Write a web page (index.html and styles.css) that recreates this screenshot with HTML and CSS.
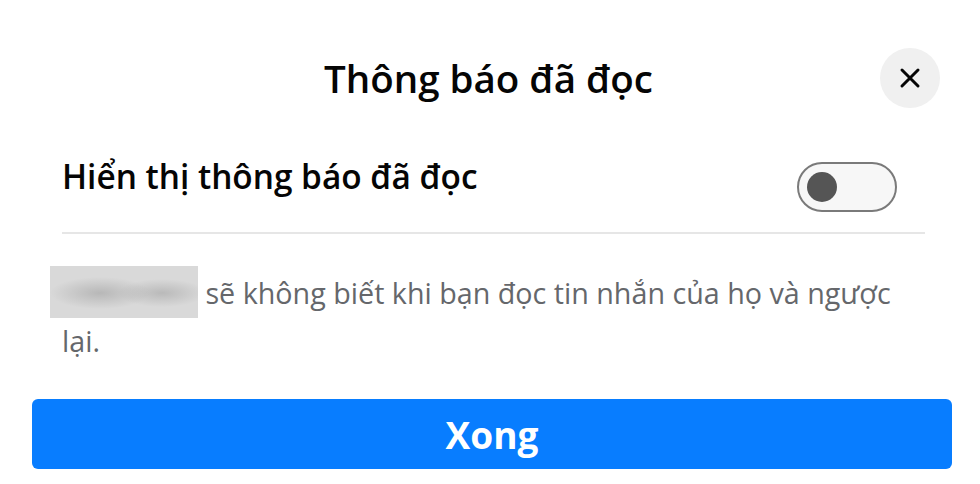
FILE: index.html
```html
<!DOCTYPE html>
<html lang="vi">
<head>
    <meta charset="UTF-8">
    <meta name="viewport" content="width=device-width, initial-scale=1.0">
    <title>Thông báo đã đọc</title>
    <link rel="stylesheet" href="styles.css">
</head>
<body>
    <div class="dialog">
        <div class="dialog-header">
            <h2 class="dialog-title">Thông báo đã đọc</h2>
            <button class="close-button" aria-label="Đóng">
                <svg width="22" height="22" viewBox="0 0 22 22">
                    <path d="M3 3 L19 19 M19 3 L3 19" stroke="#050505" stroke-width="3" stroke-linecap="round"/>
                </svg>
            </button>
        </div>

        <div class="setting-row">
            <span class="setting-label">Hiển thị thông báo đã đọc</span>
            <label class="switch">
                <input type="checkbox">
                <span class="switch-track"></span>
            </label>
        </div>

        <p class="description">
            <span class="hidden-name"></span>
            sẽ không biết khi bạn đọc tin nhắn của họ và ngược lại.
        </p>

        <button class="done-button">Xong</button>
    </div>
</body>
</html>
```

FILE: styles.css
```css
body {
    margin: 0;
    padding: 0;
    background-color: #fff;
    font-family: "Open Sans", "Noto Sans", Arial, sans-serif;
    color: #050505;
}

.dialog {
    width: 980px;
    box-sizing: border-box;
    padding: 48px 55px 0 62px;
}

.dialog-header {
    position: relative;
    display: flex;
    justify-content: center;
    align-items: center;
    height: 60px;
}

.dialog-title {
    margin: 0 0 0 -10px;
    font-size: 38.5px;
    font-weight: 600;
    line-height: 60px;
}

.close-button {
    position: absolute;
    right: -15px;
    top: 0;
    width: 60px;
    height: 60px;
    border: none;
    border-radius: 50%;
    background-color: #f0f0f0;
    display: flex;
    align-items: center;
    justify-content: center;
    padding: 0;
    cursor: pointer;
}

.setting-row {
    display: flex;
    justify-content: space-between;
    align-items: flex-start;
    margin-top: 42px;
    padding: 12px 28px 20px 0;
    border-bottom: 2px solid #e6e6e6;
}

.setting-label {
    font-size: 33.4px;
    font-weight: 600;
    line-height: 40px;
    margin-top: -6px;
}

.switch input {
    display: none;
}

.switch-track {
    display: block;
    position: relative;
    width: 96px;
    height: 46px;
    border: 2px solid #7a7a7a;
    border-radius: 25px;
    background-color: #f7f7f7;
    cursor: pointer;
}

.switch-track::after {
    content: "";
    position: absolute;
    left: 8px;
    top: 8px;
    width: 30px;
    height: 30px;
    border-radius: 50%;
    background-color: #555;
}

.description {
    margin: 32px 0 0;
    padding-right: 28px;
    font-size: 28.7px;
    line-height: 45px;
    color: #65676b;
}

.hidden-name {
    display: inline-block;
    vertical-align: -14px;
    width: 148px;
    height: 52px;
    margin-left: -12px;
    background:
        radial-gradient(ellipse 50px 16px at 50px 27px, rgba(175, 175, 175, 0.8), transparent),
        radial-gradient(ellipse 44px 14px at 112px 27px, rgba(175, 175, 175, 0.75), transparent),
        #d9d9d9;
}

.done-button {
    display: block;
    width: 920px;
    height: 70px;
    margin: 36px 0 0 -30px;
    border: none;
    border-radius: 6px;
    background-color: #087dff;
    color: #fff;
    font-family: inherit;
    font-size: 37px;
    font-weight: 700;
    cursor: pointer;
}
```
